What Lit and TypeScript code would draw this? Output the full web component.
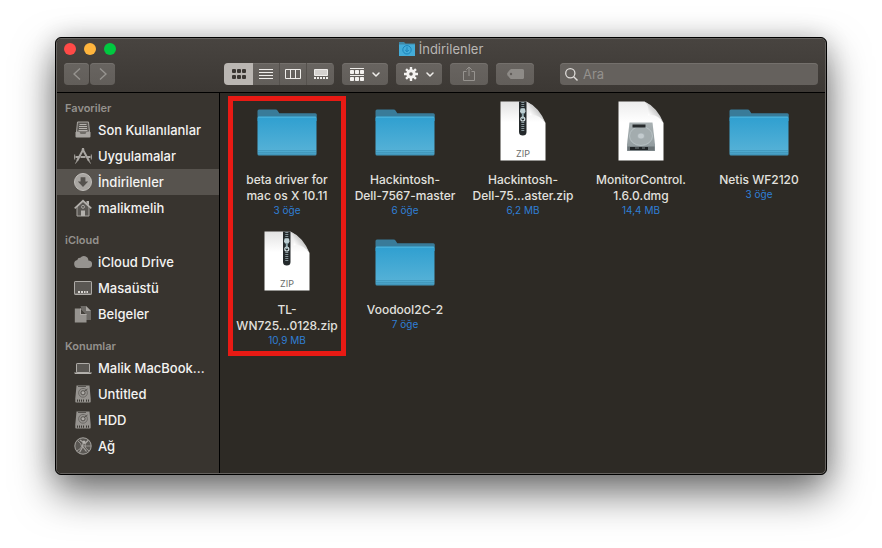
import { LitElement, html, svg, css } from "lit";
import { customElement, property } from "lit/decorators.js";

type FileKind = "folder" | "zip" | "dmg";
interface FileItem { kind: FileKind; lines: string[]; info: string }
interface Place { icon: string; label: string; active?: boolean }
interface Section { title: string; items: Place[] }

const sections: Section[] = [
  {
    title: "Favoriler",
    items: [
      { icon: "recents", label: "Son Kullanılanlar" },
      { icon: "apps", label: "Uygulamalar" },
      { icon: "downloads", label: "İndirilenler", active: true },
      { icon: "home", label: "malikmelih" },
    ],
  },
  {
    title: "iCloud",
    items: [
      { icon: "cloud", label: "iCloud Drive" },
      { icon: "desktop", label: "Masaüstü" },
      { icon: "docs", label: "Belgeler" },
    ],
  },
  {
    title: "Konumlar",
    items: [
      { icon: "laptop", label: "Malik MacBook..." },
      { icon: "disk", label: "Untitled" },
      { icon: "disk", label: "HDD" },
      { icon: "network", label: "Ağ" },
    ],
  },
  { title: "Etiketler", items: [] },
];

const files: FileItem[] = [
  { kind: "folder", lines: ["beta driver for", "mac os X 10.11"], info: "3 öğe" },
  { kind: "folder", lines: ["Hackintosh-", "Dell-7567-master"], info: "6 öğe" },
  { kind: "zip", lines: ["Hackintosh-", "Dell-75...aster.zip"], info: "6,2 MB" },
  { kind: "dmg", lines: ["MonitorControl.", "1.6.0.dmg"], info: "14,4 MB" },
  { kind: "folder", lines: ["Netis WF2120"], info: "3 öğe" },
  { kind: "zip", lines: ["TL-", "WN725...0128.zip"], info: "10,9 MB" },
  { kind: "folder", lines: ["VoodooI2C-2"], info: "7 öğe" },
];

/* Sidebar glyphs on an 18 x 18 grid */
const placeIcons: Record<string, unknown> = {
  recents: svg`
    <path d="M3.500 1h11l1 10H2.500z" fill="#5a5753" stroke="#a8a5a1"/>
    <path d="M5.500 3.500h7M5 5.500h8M5 7.500h8M4.500 9.500h9" stroke="#b4b1ad"/>
    <path d="M1.500 11h4l1 1.500h5l1-1.500h4v4.500q0 1-1 1h-13q-1 0-1-1z" fill="#a8a5a1"/>`,
  apps: svg`
    <g fill="none" stroke="#a8a5a1">
      <path d="M9.700 1.500L3 14M8.300 1.500L15 14" stroke-width="2"/>
      <path d="M2 10h3M6.500 10h5M13 10h3" stroke-width="2"/>
      <path d="M3 14l-1.500 2.500M15 14l1.500 2.500M.7 7.500v5M17.300 7.500v5M0 10h2M16 10h2"/>
    </g>`,
  downloads: svg`
    <circle cx="9" cy="9" r="8.500" fill="#a8a5a1" stroke="#c1beba"/>
    <path d="M6.600 4.200h4.800v4.300h2.800L9 13.900 3.800 8.500h2.800z" fill="#55524e"/>`,
  home: svg`
    <path d="M3 8v9h12V8L9 2.500z" fill="#5a5753" stroke="#a8a5a1"/>
    <path d="M.7 9.300L9 1.700l8.300 7.600" fill="none" stroke="#b4b1ad" stroke-width="1.600"/>
    <path d="M12.500 2h2.500v4.200l-2.500-2.200zM7 11.500h4V17H7z" fill="#b4b1ad"/>
    <circle cx="9" cy="7.800" r="1.500" fill="none" stroke="#a8a5a1"/>`,
  cloud: svg`<path d="M4.200 15a4 4 0 0 1-.9-7.900 2.800 2.800 0 0 1 3-2.300 4.500 4.500 0 0 1 8.100 2.600A3.800 3.800 0 0 1 14.200 15z" fill="#96938f"/>`,
  desktop: svg`
    <rect x=".5" y="2.500" width="17" height="13" rx=".6" fill="#5a5753" stroke="#aeaba7"/>
    <path d="M1 14.500h16" stroke="#7c7975"/>
    <path d="M4 12h2v2H4zM7 12h2v2H7zM10 12h1.500v2H10zM12.500 12h1.500v2h-1.500z" fill="#dad7d3"/>`,
  docs: svg`
    <path d="M6.500 1h5.500l5 5v9h-6z" fill="#6d6a66"/>
    <path d="M12 1v5h5z" fill="#a8a5a1"/>
    <path d="M.8 3.500H7l5.500 5.700v8.300H.8z" fill="#96938f"/>
    <path d="M6.500 3.500v6h6" fill="#45423d" stroke="#c1beba" stroke-width=".8"/>`,
  laptop: svg`
    <rect x="2.500" y="4.500" width="13" height="9" rx=".6" fill="#5a5753" stroke="#aeaba7"/>
    <path d="M0 13.600h18l-1 1.400H1z" fill="#b4b1ad"/>`,
  disk: svg`
    <path d="M2.500.5h13l1.200 13v3.200q0 .8-.8.8H2.100q-.8 0-.8-.8v-3.200z" fill="#96938f"/>
    <path d="M4 1.500h8" stroke="#55524e"/>
    <circle cx="9" cy="7.800" r="4.400" fill="none" stroke="#6d6a66"/>
    <circle cx="9" cy="7.800" r="2.100" fill="#aeaba7" stroke="#55524e"/>
    <path d="M10 6.500L13.500 4" stroke="#55524e"/>
    <path d="M3.500 14.500v2.200M5.500 14.500v2.200M7.500 14.500v2.200M9.500 14.500v2.200M12.500 14.500v2.200M14.500 14.500v2.200" stroke="#3d3a35"/>`,
  network: svg`
    <circle cx="9" cy="9" r="8.200" fill="#5a5753" stroke="#a8a5a1"/>
    <g fill="none" stroke="#a8a5a1">
      <path d="M3.500 3.500Q8 7 7.500 9.500T2.500 14M14.500 3.500Q11.500 5 11 8T15 14M7 9h5.500L17 9" stroke-width=".8"/>
      <path d="M9.500 5L8 11l-2.500 4.500M9 10l3.500 4.500M6 3l5 3.500 3-3" stroke-width="1.200"/>
    </g>
    <circle cx="10" cy="5" r="1.500" fill="#b4b1ad"/>`,
};

const paperShape = "M7.500.5H33.500Q43 6 52.500 22V59.500H7.500z";

const fileIcons: Record<FileKind, unknown> = {
  folder: svg`
    <defs>
      <linearGradient id="front" x1="0" y1="0" x2="0" y2="1">
        <stop offset="0" stop-color="#2f9fd0"/><stop offset=".85" stop-color="#53b0d6"/><stop offset="1" stop-color="#4499bd"/>
      </linearGradient>
    </defs>
    <path d="M.5 12V10q0-1.500 1.500-1.500h16.500q1.500 0 2.200 1.200l1.600 2.600h36q1.500 0 1.500 1.500V20H.5z" fill="#397b99"/>
    <path d="M.5 17q0-1.500 1.500-1.500h56q1.500 0 1.500 1.500v36q0 1.500-1.500 1.500H2Q.5 54.500.5 53z" fill="url(#front)"/>
    <path d="M1 16.200h58" stroke="#5cbbe0" stroke-width=".8"/>
    <path d="M1 49.500h58M1 51.500h58M1 53.500h58" stroke="#3e93b8" stroke-width=".7"/>`,
  zip: svg`
    <defs>
      <linearGradient id="curl" x1="0" y1="1" x2="1" y2="0"><stop offset=".3" stop-color="#fff"/><stop offset=".7" stop-color="#b5b5b5"/></linearGradient>
      <linearGradient id="shade" x1="0" y1="0" x2="0" y2="1"><stop offset="0" stop-color="#e2e2e2"/><stop offset=".35" stop-color="#fff"/></linearGradient>
    </defs>
    <path d="${paperShape}" fill="url(#shade)"/>
    <path d="M33.500.5Q38 5 36.500 14.500 45 12 52.500 22 46 6 33.500.5z" fill="url(#curl)"/>
    <path d="M26 .5h7.500V31q0 3.500-3.700 3.500T26 31z" fill="#24292b"/>
    <path d="M29.800 1v8M29.800 21v10" stroke="#85959a" stroke-width="3" stroke-dasharray="1 1"/>
    <path d="M27.500 7.500h4.500l.5 3-1 2h-3.500l-1-2z" fill="#bed0d4"/>
    <path d="M29.800 12v6" stroke="#8ca6ad" stroke-width="2"/>
    <circle cx="29.800" cy="18" r="2" fill="none" stroke="#d4e0e2" stroke-width="1.200"/>
    <text x="30" y="56" text-anchor="middle" class="ziptext">ZIP</text>`,
  dmg: svg`
    <defs>
      <linearGradient id="curl" x1="0" y1="1" x2="1" y2="0"><stop offset=".3" stop-color="#fff"/><stop offset=".7" stop-color="#b5b5b5"/></linearGradient>
      <linearGradient id="shade" x1="0" y1="0" x2="0" y2="1"><stop offset="0" stop-color="#ececec"/><stop offset=".35" stop-color="#fff"/></linearGradient>
      <linearGradient id="metal" x1="0" y1="0" x2="0" y2="1"><stop offset="0" stop-color="#a9b1b3"/><stop offset="1" stop-color="#8e989b"/></linearGradient>
    </defs>
    <path d="${paperShape}" fill="url(#shade)"/>
    <path d="M33.500.5Q39 5 37 14.500 46 12 52.500 22 46 6 33.500.5z" fill="url(#curl)"/>
    <path d="M18.500 21.500h23l2.500 22v6.500H16v-6.500z" fill="url(#metal)"/>
    <ellipse cx="30" cy="35" rx="11.500" ry="9.500" fill="#a3acae" stroke="#bcc6c9" stroke-width=".8"/>
    <ellipse cx="30" cy="35" rx="3.500" ry="3" fill="#c3cbce" stroke="#a0a9ac" stroke-width=".6"/>
    <path d="M21.500 23.500h13v3h-13z" fill="#272b2d"/>
    <path d="M16.500 45.500h27v4h-27z" fill="#6b7376"/>
    <path d="M19 46h18v3H19z" fill="#202426"/>
    <path d="M24 47h4M31 47h3" stroke="#7b8386"/>`,
};

const chevron = svg`<path d="M1 2l3 3 3-3" fill="none" stroke="#efedea" stroke-width="1.500" stroke-linecap="round" stroke-linejoin="round"/>`;

@customElement("finder-file")
class FinderFile extends LitElement {
  @property({ attribute: false }) item!: FileItem;

  static styles = css`
    :host { display: flex; flex-direction: column; align-items: center; min-width: 0; text-align: center; }
    .art { display: block; width: 60px; height: 60px; margin-bottom: 11px; }
    .ziptext { font: 9px Inter, sans-serif; fill: #6a6a6a; }
    .name { font-size: 12px; line-height: 16px; font-weight: 500; color: #e2e1df; white-space: nowrap; }
    .info { font-size: 10px; line-height: 12px; color: #2f7fd6; }
  `;

  render() {
    return html`
      <svg class="art" viewBox="0 0 60 60" aria-hidden="true">${fileIcons[this.item.kind]}</svg>
      ${this.item.lines.map((line) => html`<span class="name">${line}</span>`)}
      <span class="info">${this.item.info}</span>
    `;
  }
}

@customElement("finder-sidebar")
class FinderSidebar extends LitElement {
  static styles = css`
    :host { display: block; overflow: hidden; background: #38342f; border-right: 1px solid #000; }
    .title { margin: 0; padding: 10px 8px 0; font-size: 11px; line-height: 18px; font-weight: 600; color: #94918d; }
    .first { padding-top: 6px; }
    .list { margin: 0; padding: 0; list-style: none; }
    .place { display: flex; align-items: center; gap: 6px; height: 26px; padding: 0 17px; font-size: 13px; font-weight: 500; color: #f4f3f2; text-decoration: none; white-space: nowrap; }
    .active { background: #57534e; }
    .icon { width: 18px; height: 18px; flex: none; }
  `;

  render() {
    return html`<nav>
      ${sections.map((s, i) => html`
        <h2 class="title ${i === 0 ? "first" : ""}">${s.title}</h2>
        <ul class="list">
          ${s.items.map((p) => html`<li>
            <a class="place ${p.active ? "active" : ""}" href="#">
              <svg class="icon" viewBox="0 0 18 18" aria-hidden="true">${placeIcons[p.icon]}</svg>${p.label}
            </a></li>`)}
        </ul>`)}
    </nav>`;
  }
}

@customElement("finder-toolbar")
class FinderToolbar extends LitElement {
  static styles = css`
    :host { display: block; padding: 0 7px 7px; background: linear-gradient(#484440, #3c3834); border-bottom: 1px solid #000; }
    .titlebar { display: grid; grid-template-columns: 1fr auto 1fr; align-items: center; height: 20px; margin-bottom: 4px; }
    .lights { display: flex; gap: 8px; }
    .light { width: 12px; height: 12px; padding: 0; border: 0; border-radius: 50%; }
    .close { background: #ff4a47; }
    .minimise { background: #ffb53d; }
    .zoom { background: #00c940; }
    .title { display: flex; align-items: center; gap: 4px; margin: 0; font-size: 13px; line-height: 20px; font-weight: 400; color: #b9b6b3; }
    .bar { display: flex; gap: 8px; }
    .group { display: flex; gap: 1px; }
    .nav { margin-right: 101px; }
    .btn { display: flex; align-items: center; justify-content: center; gap: 8px; height: 22px; padding: 0; border: 0; border-radius: 4px; background: linear-gradient(#686460, #625e5a); box-shadow: inset 0 1px #74706c; }
    .arrow { width: 25px; }
    .views { display: flex; border-radius: 4px; overflow: hidden; }
    .view { width: 27px; border-radius: 0; border-right: 1px solid #55514d; }
    .view:first-child { width: 29px; background: #bab6b2; border-right: 0; box-shadow: none; }
    .view:last-child { border-right: 0; }
    .menu { width: 46px; }
    .wide { width: 38px; }
    .search { display: flex; flex: 1; align-items: center; gap: 5px; height: 22px; margin-left: 18px; padding: 0 5px; border-radius: 4px; background: #65615d; box-shadow: inset 0 1px #74706c; box-sizing: border-box; }
    .field { flex: 1; min-width: 0; padding: 0; border: 0; outline: 0; background: none; font: 13px Inter, sans-serif; color: #fff; }
    .field::placeholder { color: #94918d; opacity: 1; }
    svg { flex: none; }
  `;

  render() {
    const cells = [0, 5, 10];
    const ticks = [0, 3, 6, 9, 12];
    return html`
      <div class="titlebar">
        <div class="lights">
          <button class="light close" aria-label="Kapat"></button>
          <button class="light minimise" aria-label="Küçült"></button>
          <button class="light zoom" aria-label="Büyüt"></button>
        </div>
        <h1 class="title">
          <svg width="16" height="14" viewBox="0 0 16 14">
            <path d="M0 0h5l1.500 1.500H16V5H0z" fill="#3f87a6"/><path d="M0 2.500h16V14H0z" fill="#44acd8"/>
            <circle cx="8" cy="7.800" r="4.200" fill="none" stroke="#1a83ba"/><path d="M8 5.200v4.300M6.200 8l1.800 1.800L9.800 8" fill="none" stroke="#1a83ba"/>
          </svg>İndirilenler
        </h1>
      </div>
      <div class="bar">
        <div class="group nav">
          <button class="btn arrow" aria-label="Geri"><svg width="8" height="12" viewBox="0 0 8 12"><path d="M7 .5L1 6l6 5.500" fill="none" stroke="#96938f" stroke-width="1.400"/></svg></button>
          <button class="btn arrow" aria-label="İleri"><svg width="8" height="12" viewBox="0 0 8 12"><path d="M1 .5L7 6l-6 5.500" fill="none" stroke="#96938f" stroke-width="1.400"/></svg></button>
        </div>
        <div class="views">
          <button class="btn view" aria-label="Simge"><svg width="14" height="10" viewBox="0 0 14 10">
            ${cells.map((x) => svg`<rect x=${x} y="0" width="4" height="4" rx="1" fill="#3a3632"/><rect x=${x} y="6" width="4" height="4" rx="1" fill="#3a3632"/>`)}</svg></button>
          <button class="btn view" aria-label="Liste"><svg width="14" height="10" viewBox="0 0 14 10"><path d="M0 .5h14M0 3.500h14M0 6.500h14M0 9.500h14" stroke="#efedea"/></svg></button>
          <button class="btn view" aria-label="Sütun"><svg width="16" height="10" viewBox="0 0 16 10"><path d="M.5.5h15v9H.5zM5.500.5v9M10.500.5v9" fill="none" stroke="#efedea"/></svg></button>
          <button class="btn view" aria-label="Galeri"><svg width="14" height="10" viewBox="0 0 14 10"><path d="M.5.5h13v6H.5z" fill="#d5d2cf" stroke="#efedea"/>
            ${ticks.map((x) => svg`<rect x=${x} y="8" width="2" height="2" fill="#efedea"/>`)}</svg></button>
        </div>
        <button class="btn menu" aria-label="Grupla">
          <svg width="14" height="13" viewBox="0 0 14 13"><path d="M0 .5h14M0 7.500h14" stroke="#efedea"/>
            ${cells.map((x) => svg`<rect x=${x} y="2" width="4" height="4" rx=".8" fill="#f4f2f0"/><rect x=${x} y="9" width="4" height="4" rx=".8" fill="#f4f2f0"/>`)}</svg>
          <svg width="8" height="7" viewBox="0 0 8 7">${chevron}</svg>
        </button>
        <button class="btn menu" aria-label="Eylem">
          <svg width="14" height="14" viewBox="0 0 14 14">
            <g stroke="#f4f2f0" stroke-width="2.400"><path d="M7 0v14M0 7h14M2.050 2.050l9.900 9.900M11.950 2.050l-9.900 9.900"/></g>
            <circle cx="7" cy="7" r="4.700" fill="#f4f2f0"/><circle cx="7" cy="7" r="1.800" fill="#625e5a"/>
          </svg>
          <svg width="8" height="7" viewBox="0 0 8 7">${chevron}</svg>
        </button>
        <button class="btn wide" aria-label="Paylaş"><svg width="12" height="16" viewBox="0 0 12 16"><path d="M3.500 5.500h-3v9h11v-9h-3M6 10V1.200M3.200 3.800L6 1l2.800 2.800" fill="none" stroke="#96938f"/></svg></button>
        <button class="btn wide" aria-label="Etiket"><svg width="17" height="10" viewBox="0 0 17 10"><path d="M4.200 0H15.500Q17 0 17 1.500v7Q17 10 15.500 10H4.200Q3.200 10 .5 6.200q-.8-1.200 0-2.400Q3.200 0 4.200 0z" fill="#8e8b87"/><circle cx="4" cy="5" r="1.200" fill="#625e5a"/></svg></button>
        <label class="search">
          <svg width="13" height="13" viewBox="0 0 13 13"><circle cx="5.300" cy="5.300" r="4.600" fill="none" stroke="#dedbd8" stroke-width="1.300"/><path d="M8.700 8.700l3.800 3.800" stroke="#dedbd8" stroke-width="1.400"/></svg>
          <input class="field" type="search" placeholder="Ara" aria-label="Ara">
        </label>
      </div>
    `;
  }
}

@customElement("app-root")
class AppRoot extends LitElement {
  static styles = css`
    :host { display: flex; box-sizing: border-box; height: 100vh; padding: 37px 55px 73px; background: #fff; font-family: Inter, sans-serif; }
    .window { display: flex; flex: 1; flex-direction: column; min-width: 0; overflow: hidden; border: 1px solid #000; border-radius: 6px; background: #2d2a25; box-shadow: 0 18px 40px rgba(0, 0, 0, .56), 0 0 24px rgba(0, 0, 0, .16); }
    .frame { display: flex; flex: 1; flex-direction: column; min-height: 0; overflow: hidden; border: 1px solid #65625f; border-radius: 5px; }
    .body { display: grid; flex: 1; grid-template-columns: 163px 1fr; min-height: 0; }
    .content { position: relative; padding: 8px 7px 0 8px; overflow: hidden; }
    .files { display: grid; grid-template-columns: repeat(5, 1fr); grid-auto-rows: 130px; }
    .mark { position: absolute; left: 8px; top: 3px; width: 118px; height: 260px; box-sizing: border-box; border: 5px solid #e81a14; }
  `;

  render() {
    return html`
      <main class="window"><div class="frame">
        <finder-toolbar></finder-toolbar>
        <div class="body">
          <finder-sidebar></finder-sidebar>
          <section class="content">
            <div class="files">${files.map((f) => html`<finder-file .item=${f}></finder-file>`)}</div>
            <div class="mark"></div>
          </section>
        </div>
      </div></main>
    `;
  }
}
